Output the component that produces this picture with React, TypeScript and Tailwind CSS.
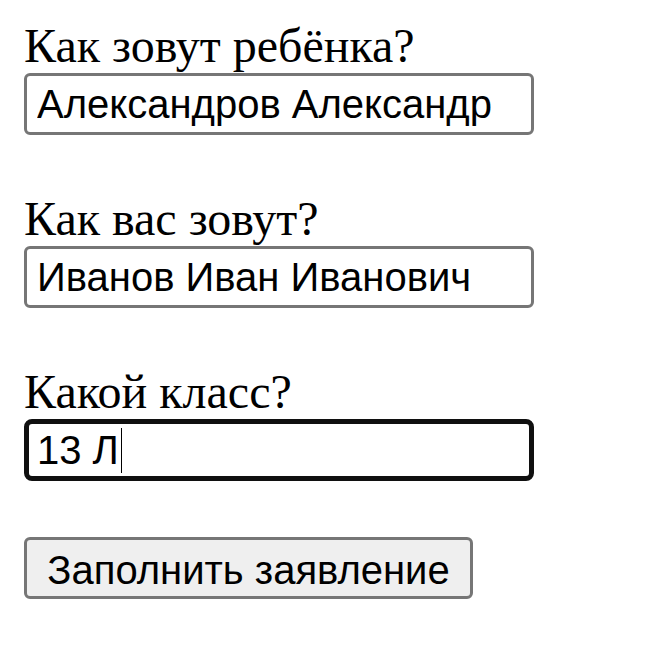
const labelClass = "block font-['Liberation_Serif',serif] text-[48px] leading-[55px] text-black";
const inputClass =
  "h-[62px] w-[510px] rounded-[6px] border-[3px] border-[#767676] bg-white px-[10px] font-['Liberation_Sans',Arial,sans-serif] text-[40px] text-black outline-none";

export default function App() {
  return (
    <div className="min-h-screen bg-white pl-6 pt-[18px]">
      <form className="flex flex-col items-start" onSubmit={(e) => e.preventDefault()}>
        <label className={labelClass}>Как зовут ребёнка?</label>
        <input className={inputClass} defaultValue="Александров Александр" />

        <label className={labelClass + " mt-[56px]"}>Как вас зовут?</label>
        <input className={inputClass} defaultValue="Иванов Иван Иванович" />

        <label className={labelClass + " mt-[56px]"}>Какой класс?</label>
        {/* focused field, drawn with the caret */}
        <div className="flex h-[62px] w-[510px] items-center rounded-[8px] border-[5px] border-[#101010] bg-white px-[8px] font-['Liberation_Sans',Arial,sans-serif] text-[40px] text-black">
          <span>13 Л</span>
          <span className="ml-[2px] h-[45px] w-px bg-black" />
        </div>

        <button
          type="submit"
          className="mt-[56px] h-[62px] w-[449px] rounded-[6px] border-[3px] border-[#767676] bg-[#efefef] font-['Liberation_Sans',Arial,sans-serif] text-[40px] text-black"
        >
          Заполнить заявление
        </button>
      </form>
    </div>
  );
}
